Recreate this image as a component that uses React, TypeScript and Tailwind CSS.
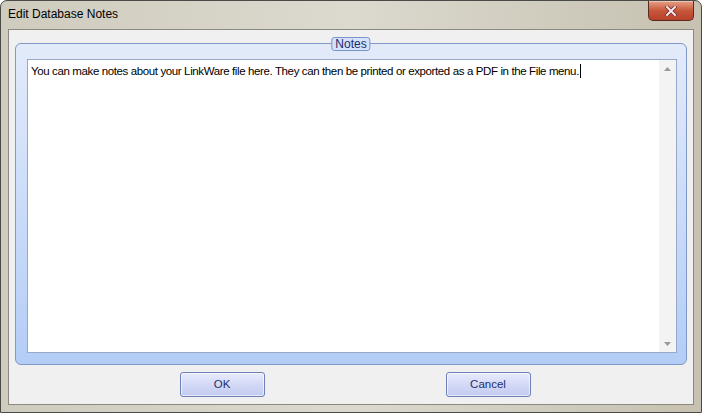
import React from 'react';

const noteText =
  'You can make notes about your LinkWare file here. They can then be printed or exported as a PDF in the File menu.';

function CloseButton() {
  return (
    <div className="absolute right-[7px] top-0 flex h-[20px] w-[46px] items-center justify-center rounded-b-[5px] border border-t-0 border-[#5a2a20] bg-gradient-to-b from-[#e6a08a] via-[#c7583a] to-[#b8402a] shadow-[inset_0_1px_0_rgba(255,255,255,0.4)]">
      <svg width="12" height="10" viewBox="0 0 12 10">
        <path d="M2 1 L10 9 M10 1 L2 9" stroke="#6a2a2a" strokeWidth="3.4" strokeLinecap="square" />
        <path d="M2 1 L10 9 M10 1 L2 9" stroke="#fbe8f0" strokeWidth="2" strokeLinecap="square" />
      </svg>
    </div>
  );
}

function DialogButton({ label }: { label: string }) {
  return (
    <button className="flex h-[25px] w-[85px] items-center justify-center rounded-[3px] border border-[#6f7fb8] bg-gradient-to-b from-[#e9ecfc] via-[#d3d9f6] to-[#c2cbf1] text-[11.5px] text-[#1e2f6e] shadow-[inset_0_0_0_1px_rgba(255,255,255,0.6)]">
      {label}
    </button>
  );
}

function ScrollArrow({ up }: { up: boolean }) {
  return (
    <div className="flex h-[17px] items-center justify-center">
      <svg width="7" height="4" viewBox="0 0 7 4">
        <path d={up ? 'M0 4 L3.5 0 L7 4 Z' : 'M0 0 L3.5 4 L7 0 Z'} fill="#9a9a9a" />
      </svg>
    </div>
  );
}

export default function App() {
  return (
    <div
      className="relative flex h-[413px] w-[702px] flex-col overflow-hidden rounded-t-[7px] border border-[#4a4a46] bg-gradient-to-r from-[#cfcbbd] via-[#dcd9cf] to-[#c6c1b0]"
      style={{ fontFamily: '"Liberation Sans", Arial, sans-serif' }}
    >
      {/* title bar */}
      <div className="flex h-[28px] shrink-0 items-center pb-[2px] pl-[7px] text-[12px] text-black">
        Edit Database Notes
      </div>
      <CloseButton />

      {/* client area */}
      <div className="mx-[7px] mb-[7px] flex flex-1 flex-col border border-[#8c8a80] bg-[#f0f0f0] px-[6px] pb-[6px] pt-[13px]">
        <div className="relative flex h-[322px] flex-col rounded-[6px] border border-[#7f97c9] bg-gradient-to-b from-[#e3ebfa] via-[#cbdcf9] to-[#b3cdf7] pb-[11px] pl-[11px] pr-[9px] pt-[15px]">
          <div className="absolute left-1/2 top-[-7px] flex h-[14px] -translate-x-1/2 items-center rounded-[3px] border border-[#7b93c8] bg-[#d5e2fa] px-[3px] text-[12px] leading-none text-[#1c2d6a]">
            Notes
          </div>

          <div className="flex flex-1 border border-[#99a8c4] bg-white">
            <div className="flex-1 px-[3px] pt-[1px] text-[11.5px] leading-[15px] tracking-[-0.38px] text-black">
              {noteText}
              <span className="ml-[1px] inline-block h-[14px] w-[1px] translate-y-[3px] bg-black" />
            </div>
            <div className="flex w-[17px] flex-col justify-between bg-[#f3f3f3]">
              <ScrollArrow up />
              <ScrollArrow up={false} />
            </div>
          </div>
        </div>

        <div className="mt-[7px] flex justify-center gap-[181px] pl-[8px]">
          <DialogButton label="OK" />
          <DialogButton label="Cancel" />
        </div>
      </div>
    </div>
  );
}
